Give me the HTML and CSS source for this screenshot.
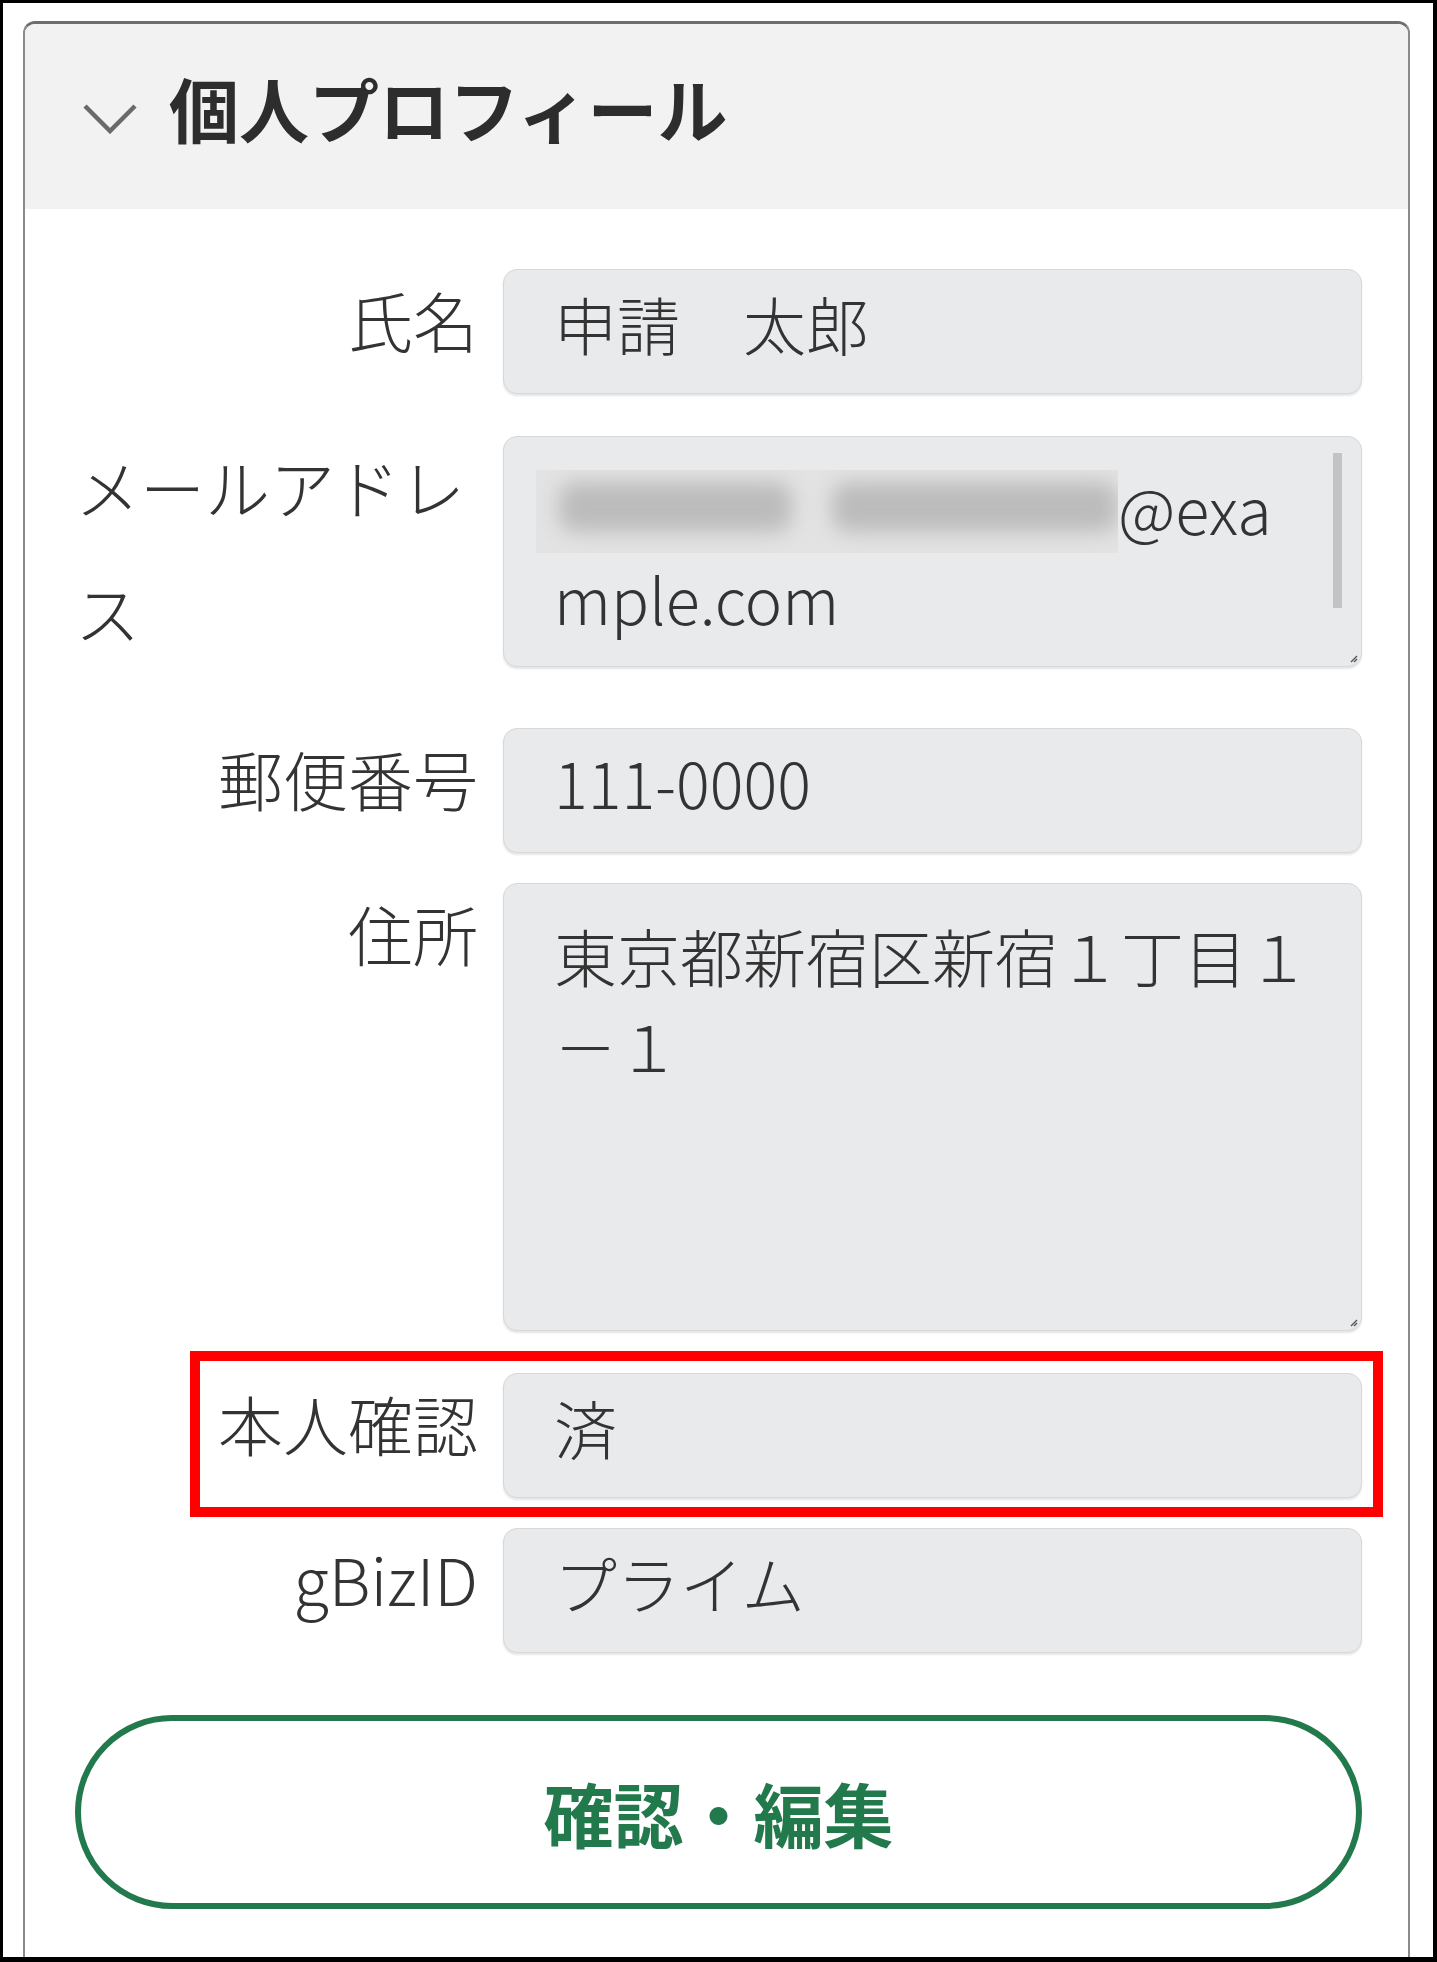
FILE: index.html
```html
<!DOCTYPE html>
<html lang="ja">
<head>
  <meta charset="UTF-8">
  <title>個人プロフィール</title>
  <link rel="stylesheet" href="styles.css">
</head>
<body>
  <div class="frame">
    <section class="card">
      <header class="card-header">
        <svg class="chevron" viewBox="0 0 54 30" aria-hidden="true">
          <polyline points="2,2 27,27 52,2" />
        </svg>
        <h2 class="card-title">個人プロフィール</h2>
      </header>

      <div class="card-body">
        <div class="field gap-m">
          <div class="field-label">氏名</div>
          <div class="field-value">申請　太郎</div>
        </div>

        <div class="field gap-l">
          <div class="field-label field-label--wrap">メールアドレス</div>
          <div class="field-value field-area field-area--mail">
            <div class="mail-line">
              <span class="masked"><span class="blob blob--short"></span><span class="blob blob--long"></span></span>@exa
            </div>
            <div>mple.com</div>
            <span class="scroll-thumb"></span>
            <svg class="grip" viewBox="0 0 10 10" aria-hidden="true"><path d="M9 3 L3 9 M9 6 L6 9" /></svg>
          </div>
        </div>

        <div class="field gap-s">
          <div class="field-label">郵便番号</div>
          <div class="field-value">111-0000</div>
        </div>

        <div class="field gap-m">
          <div class="field-label">住所</div>
          <div class="field-value field-area field-area--address">
            <div>東京都新宿区新宿１丁目１</div>
            <div>－１</div>
            <svg class="grip" viewBox="0 0 10 10" aria-hidden="true"><path d="M9 3 L3 9 M9 6 L6 9" /></svg>
          </div>
        </div>

        <div class="field field--marked gap-s">
          <div class="field-label">本人確認</div>
          <div class="field-value">済</div>
        </div>

        <div class="field">
          <div class="field-label">gBizID</div>
          <div class="field-value">プライム</div>
        </div>

        <button class="edit-button" type="button">確認・編集</button>
      </div>
    </section>
  </div>
</body>
</html>
```

FILE: styles.css
```css
body {
  margin: 0;
  background: #fff;
  color: #333;
  font-family: "Noto Sans CJK JP", "Noto Sans", sans-serif;
}
.frame {
  width: 1437px;
  height: 1962px;
  box-sizing: border-box;
  border: 3px solid #000;
  border-right-width: 4px;
  border-bottom-width: 5px;
  padding: 18px 23px 0 20px;
  overflow: hidden;
}
.card {
  background: #fff;
  border: 2px solid #8a8a8a;
  border-top: 3px solid #6e6e6e;
  border-radius: 12px 12px 0 0;
  padding-bottom: 120px;
}
.card-header {
  height: 185px;
  background: #f2f2f2;
  border-radius: 10px 10px 0 0;
  display: flex;
  align-items: center;
  gap: 32px;
  padding-left: 58px;
}
.chevron {
  width: 54px;
  height: 30px;
  margin-top: 5px;
  fill: none;
  stroke: #6a6a6a;
  stroke-width: 4.5;
}
.card-title {
  margin: 0 0 18px;
  font-size: 70px;
  font-weight: 700;
  line-height: 70px;
  color: #2d2d2d;
}
.card-body {
  padding: 60px 46px 0 50px;
}

/* 行 */
.field {
  display: flex;
  align-items: flex-start;
  gap: 25px;
}
.gap-s { margin-bottom: 30px; }
.gap-m { margin-bottom: 42px; }
.gap-l { margin-bottom: 54px; }
.field-label {
  width: 403px;
  flex: none;
  margin-top: -12px;
  font-size: 65px;
  font-weight: 300;
  line-height: 125px;
  text-align: right;
  color: #333;
}
.field-label--wrap {
  text-align: left;
}
.field-value {
  flex: 1;
  position: relative;
  box-sizing: border-box;
  height: 125px;
  padding: 0 50px;
  background: #e9eaec;
  border: 1px solid #d7d8da;
  border-radius: 14px;
  box-shadow: 0 2px 2px rgba(0, 0, 0, 0.1);
  font-size: 63px;
  font-weight: 300;
  line-height: 105px;
  white-space: nowrap;
}
.field-area {
  padding-top: 26px;
  line-height: 90px;
}
.field-area--mail { height: 231px; }
.field-area--address { height: 448px; }

.field--marked {
  position: relative;
}
.field--marked::after {
  content: "";
  position: absolute;
  top: -22px;
  bottom: -19px;
  left: 115px;
  right: -21px;
  border: 10px solid #ff0000;
  pointer-events: none;
}

/* メールアドレスの伏せ字 */
.mail-line {
  display: flex;
  align-items: flex-start;
  height: 90px;
}
.masked {
  display: flex;
  align-items: flex-start;
  gap: 40px;
  box-sizing: border-box;
  width: 582px;
  height: 83px;
  margin: 7px 0 0 -18px;
  padding: 12px 0 0 23px;
  background: #e3e3e4;
  overflow: hidden;
}
.blob {
  height: 50px;
  border-radius: 16px;
  background: #bcbcbc;
  filter: blur(10px);
}
.blob--short { width: 236px; }
.blob--long { width: 290px; }

.scroll-thumb {
  position: absolute;
  top: 16px;
  right: 19px;
  width: 9px;
  height: 155px;
  background: #c3c3c3;
}
.grip {
  position: absolute;
  right: 3px;
  bottom: 3px;
  width: 10px;
  height: 10px;
  fill: none;
  stroke: #555;
  stroke-width: 1.4;
}

.edit-button {
  display: block;
  width: 100%;
  height: 194px;
  margin-top: 62px;
  background: #fff;
  border: 6px solid #22794b;
  border-radius: 97px;
  color: #22794b;
  font-family: inherit;
  font-size: 70px;
  font-weight: 700;
  cursor: pointer;
}
```
